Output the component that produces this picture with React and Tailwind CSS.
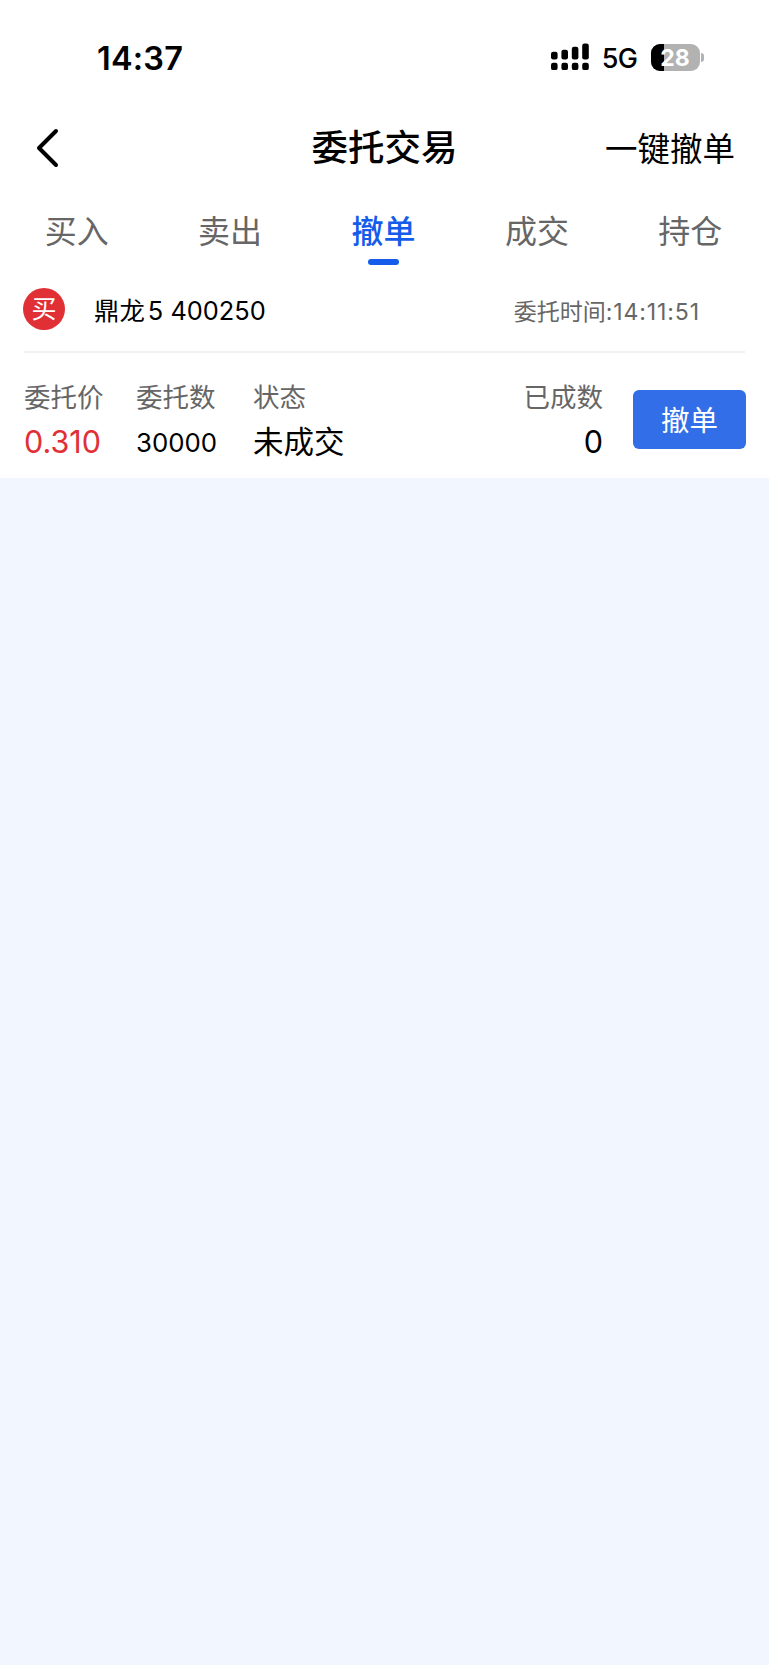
import { useState } from 'react'

const TABS = ['买入', '卖出', '撤单', '成交', '持仓']

const ORDERS = [
  {
    id: 1,
    side: '买',
    name: '鼎龙',
    suffix: '5',
    code: '400250',
    time: '14:11:51',
    price: '0.310',
    amount: '30000',
    status: '未成交',
    filled: '0',
  },
]

function SignalIcon() {
  return (
    <svg width="38" height="28" viewBox="0 0 38 28" className="shrink-0">
      <rect x="0" y="8.7" width="6.6" height="7.8" rx="2.2" />
      <rect x="10.4" y="6.8" width="6.6" height="9.7" rx="2.2" />
      <rect x="20.8" y="3.7" width="6.6" height="12.8" rx="2.2" />
      <rect x="31.2" y="0.5" width="6.6" height="16" rx="2.2" />
      <rect x="0" y="19.7" width="6.6" height="7.4" rx="2.2" />
      <rect x="10.4" y="19.7" width="6.6" height="7.4" rx="2.2" />
      <rect x="20.8" y="19.7" width="6.6" height="7.4" rx="2.2" />
      <rect x="31.2" y="19.7" width="6.6" height="7.4" rx="2.2" />
    </svg>
  )
}

function Battery({ level }) {
  return (
    <div className="flex items-center">
      <div className="relative h-[27px] w-[49px] overflow-hidden rounded-[9px] bg-[#b2b2b2]">
        <div className="h-full bg-black" style={{ width: `${level}%` }} />
        <span className="absolute inset-0 flex items-center justify-center pt-[2px] text-[23px] font-bold leading-none text-white">
          {level}
        </span>
      </div>
      <div className="ml-[1.5px] h-[9px] w-[3px] rounded-r-full bg-[#b2b2b2]" />
    </div>
  )
}

function StatusBar() {
  return (
    <div className="flex h-[115px] justify-between pl-[97px] pr-[65px]">
      <span className="pt-[42px] text-[32.5px] font-semibold leading-[33px] tracking-[0.2px]">14:37</span>
      <div className="mt-[43px] flex h-[28px] items-center">
        <SignalIcon />
        <span className="ml-[13px] mr-[13px] pt-[3px] text-[27px] font-medium leading-none tracking-[-0.5px]">5G</span>
        <Battery level={28} />
      </div>
    </div>
  )
}

function Header() {
  return (
    <header className="grid h-[66px] grid-cols-3 items-center pl-[35px] pr-[34px]">
      <svg width="24" height="40" viewBox="0 0 24 40" fill="none" stroke="currentColor" strokeWidth="4" strokeLinecap="round" strokeLinejoin="round">
        <path d="M21 3 4 20l17 17" />
      </svg>
      <h1 className="-ml-px text-center text-[36.5px] font-medium leading-none whitespace-nowrap">委托交易</h1>
      <button className="pt-[4px] text-right text-[32.5px] leading-none whitespace-nowrap">一键撤单</button>
    </header>
  )
}

function Field({ label, align = '', className = '', children }) {
  return (
    <div className={`flex flex-col ${align} ${className}`}>
      <span className="h-[45px] text-[26.5px] leading-[34px] text-[#666]">{label}</span>
      {children}
    </div>
  )
}

function OrderCard({ order }) {
  return (
    <div className="bg-white">
      <div className="mx-[24px] flex h-[84px] items-center border-b-2 border-[#f1f1f3]">
        <span className="-ml-px -mt-[2px] flex size-[42px] items-center justify-center rounded-full bg-[#e03036] pt-px text-[25px] leading-none text-white">
          {order.side}
        </span>
        <span className="ml-[29px] pt-[2px] text-[25.4px] leading-none">
          {order.name}
          <span className="ml-[3px]">{order.suffix}</span> {order.code}
        </span>
        <span className="ml-auto mr-[45px] pt-[4px] text-[23px] leading-none text-[#666]">
          委托时间<span className="tracking-[0.9px]">:{order.time}</span>
        </span>
      </div>
      <div className="flex h-[125px] pl-[24px] pr-[23px] pt-[27px]">
        <Field label="委托价" className="w-[112px]">
          <span className="text-[30.5px] leading-[34px] text-[#e03036]">{order.price}</span>
        </Field>
        <Field label="委托数" className="w-[117px]">
          <span className="text-[25.8px] leading-[36px]">{order.amount}</span>
        </Field>
        <Field label="状态" className="flex-1">
          <span className="text-[30.5px] leading-[34px]">{order.status}</span>
        </Field>
        <Field label="已成数" align="items-end" className="mr-[30px]">
          <span className="text-[30.5px] leading-[34px]">{order.filled}</span>
        </Field>
        <button className="mt-[10px] h-[59px] w-[113px] rounded-md bg-[#326ee8] pt-[3px] text-[28.5px] leading-none text-white">
          撤单
        </button>
      </div>
    </div>
  )
}

export default function App() {
  const [active, setActive] = useState('撤单')

  return (
    <div className="min-h-screen w-full bg-[#f2f6ff] font-['Inter','Noto_Sans_CJK_SC',sans-serif] text-black">
      <div className="bg-white">
        <StatusBar />
        <Header />

        {/* Tabs */}
        <nav className="grid h-[88px] grid-cols-5 pr-[2px]">
          {TABS.map(tab => (
            <button
              key={tab}
              onClick={() => setActive(tab)}
              className={`flex flex-col items-center pt-[34px] text-[32px] leading-[34px] ${
                active === tab ? 'font-medium text-[#155ceb]' : 'text-[#666]'
              }`}
            >
              {tab}
              {active === tab && <span className="ml-px mt-[10px] h-[6px] w-[31px] rounded-full bg-[#155ceb]" />}
            </button>
          ))}
        </nav>
      </div>

      {ORDERS.map(order => (
        <OrderCard key={order.id} order={order} />
      ))}
    </div>
  )
}
